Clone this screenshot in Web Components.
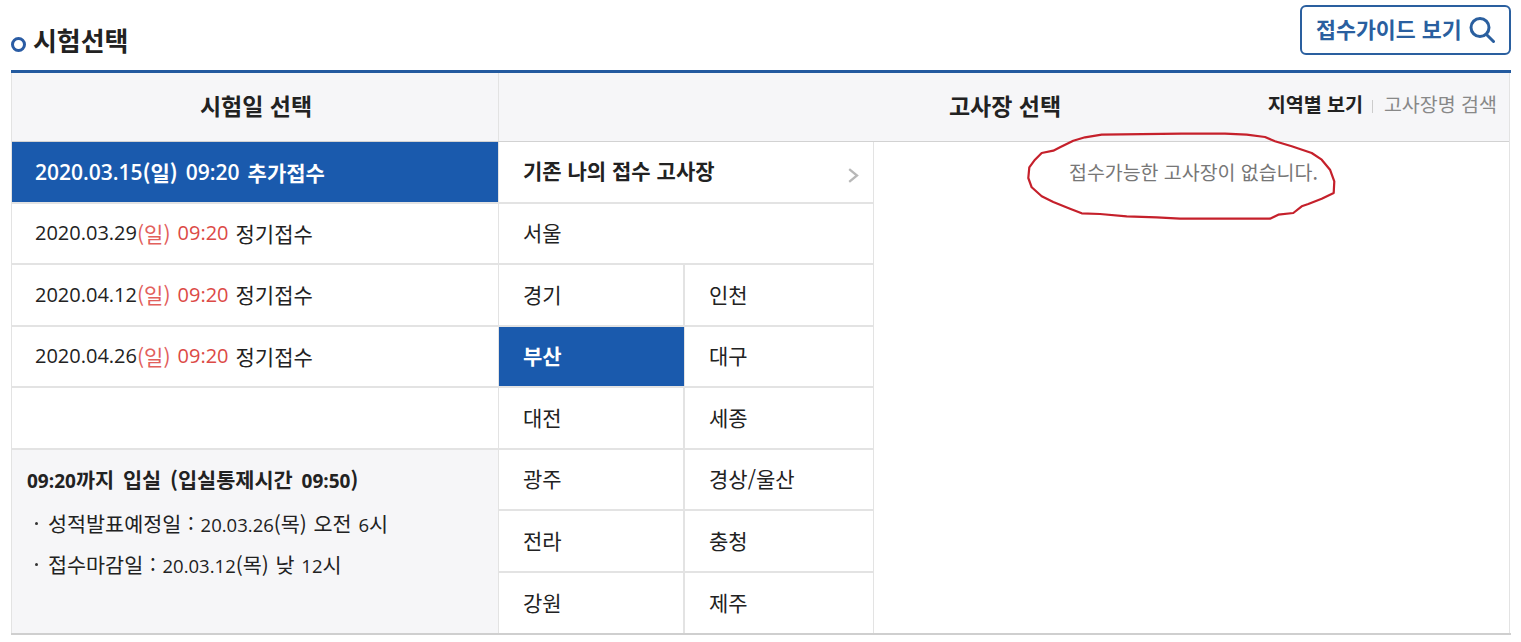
<!DOCTYPE html>
<html lang="ko"><head><meta charset="utf-8"><title>시험선택</title>
<style>
html,body{margin:0;background:#fff;}
body{font-family:"Noto Sans CJK KR","Noto Sans",sans-serif;color:#222;}
</style></head><body>
<exam-page></exam-page>
<script>
const KR='"Noto Sans CJK KR","Noto Sans",sans-serif';
function def(name,css,html,init){
  customElements.define(name,class extends HTMLElement{
    constructor(){super();this.attachShadow({mode:'open'}).innerHTML='<style>'+css+'</style>'+(html||'');}
    connectedCallback(){if(init)init(this);}
  });
}
def('section-title',`:host{display:flex;align-items:center;gap:7px;font:700 26px/38px ${KR};color:#222;letter-spacing:-.1px;padding-bottom:11px}
 i{display:block;box-sizing:border-box;width:15px;height:15px;border:3.5px solid #2a5ca4;border-radius:50%;margin-top:9px}`,
 `<i></i><slot></slot>`);
def('guide-button',`:host{display:flex;align-items:center;gap:7px;box-sizing:border-box;width:211px;height:50px;border:2px solid #2a5f9f;border-radius:6px;color:#2a5f9f;font:700 21.7px/1 ${KR};margin-bottom:15px;padding:0 0 2px 14px}
 svg{display:block;margin-top:2px}`,
 `<slot></slot><svg width="26" height="26" viewBox="0 0 26 26" fill="none" stroke="#2a5f9f" stroke-width="3"><circle cx="11" cy="10.5" r="9"/><path d="M17.5 17.5l7 7" stroke-linecap="round"/></svg>`);
def('view-tabs',`:host{display:flex;align-items:center;justify-content:flex-end;font:400 19.5px/1 ${KR};color:#888;padding-right:12px;padding-bottom:4px}
 b{font-weight:700;color:#222;font-size:19.6px;letter-spacing:-.1px}
 i{display:block;width:1px;height:13px;background:#ccc;margin:6px 11px 0 9px}`,
 `<b>지역별 보기</b><i></i><span>고사장명 검색</span>`);
def('table-head',`:host{display:grid;grid-template-columns:487px 1fr;box-sizing:border-box;height:69px;background:#f6f6f8;border-bottom:1px solid #d2d2d2;font:700 23px/1 ${KR};color:#222}
 div{display:flex;align-items:center;justify-content:center;padding-bottom:3px}
 .a{border-right:1px solid #e3e3e3;padding-left:2px;box-sizing:border-box}
 .b{display:grid;grid-template-columns:1fr auto 1fr;padding-left:2px}
 .b span{grid-column:2}`,
 `<div class="a">시험일 선택</div><div class="b"><span>고사장 선택</span><view-tabs></view-tabs></div>`);
def('date-row',`:host{display:flex;align-items:center;box-sizing:border-box;padding:0 0 0 23px;border-bottom:2px solid #e3e3e3;border-right:1px solid #e3e3e3;font:400 21px/1 ${KR};color:#222;white-space:pre}
 :host([active]){background:#1a5aad;color:#fff;font-weight:700;padding-top:1px}
 .n{font:400 20px/1 "Open Sans",sans-serif}
 :host([active]) .n{font:600 21px/1 "Open Sans",sans-serif}
 :host([active]) .t{margin:0 8px}
 .t{margin:0 7px}
 .r{color:#dc4a46}
 .r.p{color:#e2605c}
 :host([active]) .r{color:inherit}`,'',
 el=>{
  const a=el.getAttribute.bind(el);
  if(a('date')) el.shadowRoot.innerHTML+=`<span class="n">${a('date')}</span><span class="r p">(${a('day')})</span><span class="n r t">${a('time')}</span><span>${a('kind')}</span>`;
 });
def('region-cell',`:host{display:flex;align-items:center;box-sizing:border-box;padding:0 0 1px 24px;border-bottom:2px solid #e3e3e3;border-right:2px solid #e3e3e3;font:400 21px/1 ${KR};color:#222;position:relative}
 :host([active]){background:#1a5aad;color:#fff;font-weight:700;border-right-width:1px}
 :host([edge]){border-right-width:1px}
 :host([last]){border-bottom:0}
 :host([strong]){font-weight:700;padding-bottom:2px}
 svg{position:absolute;right:14px;top:26px;display:none}
 :host([strong]) svg{display:block}`,
 `<slot></slot><svg width="11" height="15" viewBox="0 0 11 15" fill="none" stroke="#b8b8b8" stroke-width="2.3"><path d="M1.2 1.2l7.8 6.3-7.8 6.3"/></svg>`);
def('info-box',`:host{display:block;box-sizing:border-box;background:#f6f6f8;border-right:1px solid #e3e3e3;padding:16px 0 0 15px;font:400 20.7px/1 ${KR};color:#222;white-space:pre}
 h3{margin:0 0 16px;font:700 20.8px/26px ${KR};color:#222;word-spacing:3px}
 h3 .n{font:700 19px/26px "Open Sans",sans-serif}
 p{margin:0 0 13px;line-height:26px;padding-left:21px;position:relative;word-spacing:1px}
 p::before{content:"";position:absolute;left:8px;top:12px;width:3px;height:3px;border-radius:50%;background:#333}
 .n{font:400 18.5px/26px "Open Sans",sans-serif}`,
 `<h3><span class="n">09:20</span>까지 입실 (입실통제시간 <span class="n">09:50</span>)</h3><p>성적발표예정일 : <span class="n">20.03.26</span>(목) 오전 <span class="n">6</span>시</p><p>접수마감일 : <span class="n">20.03.12</span>(목) 낮 <span class="n">12</span>시</p>`);
def('exam-table',`:host{display:block;position:relative;border-top:3px solid #235a9f;border-bottom:2px solid #cfcfcf}
 .wrap{box-sizing:border-box;margin-right:1px;border-left:1px solid #e3e3e3;border-right:1px solid #e3e3e3}
 .body{display:grid;grid-template-columns:487px 186px 189px 1fr;grid-template-rows:repeat(7,61.5px) 60.5px}
 .msg{grid-column:4;grid-row:1 / 9;font:400 19.5px/1 ${KR};color:#777;padding:20px 0 0 195px;letter-spacing:-.05px}
 svg{position:absolute;left:1009px;top:57px;pointer-events:none}`,
 `<div class="wrap"><table-head></table-head><div class="body">
  <date-row active style="grid-row:1" date="2020.03.15" day="일" time="09:20" kind="추가접수"></date-row>
  <date-row style="grid-row:2" date="2020.03.29" day="일" time="09:20" kind="정기접수"></date-row>
  <date-row style="grid-row:3" date="2020.04.12" day="일" time="09:20" kind="정기접수"></date-row>
  <date-row style="grid-row:4" date="2020.04.26" day="일" time="09:20" kind="정기접수"></date-row>
  <date-row style="grid-row:5"></date-row>
  <info-box style="grid-row:6 / 9;grid-column:1"></info-box>
  <region-cell edge strong style="grid-row:1;grid-column:2 / 4">기존 나의 접수 고사장</region-cell>
  <region-cell edge style="grid-row:2;grid-column:2 / 4">서울</region-cell>
  <region-cell style="grid-row:3;grid-column:2">경기</region-cell><region-cell edge style="grid-row:3;grid-column:3">인천</region-cell>
  <region-cell active style="grid-row:4;grid-column:2">부산</region-cell><region-cell edge style="grid-row:4;grid-column:3">대구</region-cell>
  <region-cell style="grid-row:5;grid-column:2">대전</region-cell><region-cell edge style="grid-row:5;grid-column:3">세종</region-cell>
  <region-cell style="grid-row:6;grid-column:2">광주</region-cell><region-cell edge style="grid-row:6;grid-column:3">경상/울산</region-cell>
  <region-cell style="grid-row:7;grid-column:2">전라</region-cell><region-cell edge style="grid-row:7;grid-column:3">충청</region-cell>
  <region-cell last style="grid-row:8;grid-column:2">강원</region-cell><region-cell last edge style="grid-row:8;grid-column:3">제주</region-cell>
  <div class="msg">접수가능한 고사장이 없습니다.</div>
 </div></div>
 <svg width="320" height="90" viewBox="1020 130 320 90" fill="none" stroke="#c5202b" stroke-width="2.2" stroke-linejoin="round"><path d="M1101.7 134.7L1181.7 133.7L1225 133.7L1246.7 134.7L1265 137L1275 141.3L1291.7 146.3L1311.7 153L1321.7 159.7L1330 169.7L1334.3 181.3L1333.7 193L1321.7 198.7L1308.3 204L1301.7 206.3L1293.3 213L1278.3 214.7L1270 218.7L1225 218.7L1180 218.7L1156.7 217.3L1126.7 216.3L1100 214L1081.7 213.3L1070 208.7L1053.3 202L1041.7 196.3L1031.7 187.3L1028.3 178L1029.3 167.3L1035 159.7L1041.7 153L1053.3 150.7L1060 147.3L1073.3 140.7L1085 137.3Z"/></svg>`);
def('exam-page',`:host{display:block;padding:0 10px 0 11px}
 header{display:flex;justify-content:space-between;align-items:flex-end;height:70px}`,
 `<header><section-title>시험선택</section-title><guide-button>접수가이드 보기</guide-button></header><exam-table></exam-table>`);
</script>
</body></html>
